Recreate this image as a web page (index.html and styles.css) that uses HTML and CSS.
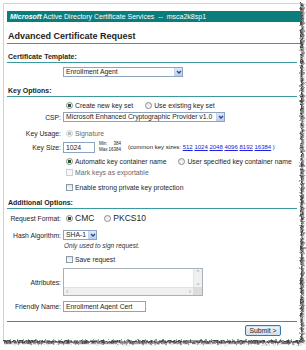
FILE: index.html
```html
<!DOCTYPE html>
<html lang="en">
<head>
  <meta charset="UTF-8" />
  <title>Microsoft Active Directory Certificate Services</title>
  <link rel="stylesheet" href="styles.css">
</head>
<body>
  <div class="paper">
    <div class="banner"><b>Microsoft</b> Active Directory Certificate Services &nbsp;--&nbsp; msca2k8sp1</div>
    <h1 class="title">Advanced Certificate Request</h1>

    <form class="form">
      <h2 class="section mt-7">Certificate Template:</h2>
      <div class="row mt-4">
        <span class="label"></span>
        <div class="select w-template">
          <select><option>Enrollment Agent</option></select>
          <span class="arrow"><svg width="8" height="8" viewBox="0 0 8 8"><path d="M2 3 L4 5 L6 3" fill="none" stroke="#23478c" stroke-width="1.3"/></svg></span>
        </div>
      </div>

      <h2 class="section mt-8">Key Options:</h2>
      <div class="row mt-3">
        <span class="label"></span>
        <div class="opts">
          <label class="opt"><input type="radio" class="radio" name="keyset" checked> Create new key set</label>
          <label class="opt"><input type="radio" class="radio" name="keyset"> Use existing key set</label>
        </div>
      </div>
      <div class="row mt-2">
        <span class="label">CSP:</span>
        <div class="select w-csp">
          <select><option>Microsoft Enhanced Cryptographic Provider v1.0</option></select>
          <span class="arrow"><svg width="8" height="8" viewBox="0 0 8 8"><path d="M2 3 L4 5 L6 3" fill="none" stroke="#23478c" stroke-width="1.3"/></svg></span>
        </div>
      </div>
      <div class="row mt-6">
        <span class="label">Key Usage:</span>
        <div class="opts">
          <label class="opt dim"><input type="radio" class="radio" checked disabled> Signature</label>
        </div>
      </div>
      <div class="row row-tall mt-3">
        <span class="label">Key Size:</span>
        <div class="keysize">
          <input type="text" class="field w-size" value="1024">
          <div class="limits">
            <span><i>Min:</i><i>384</i></span>
            <span><i>Max</i><i>16384</i></span>
          </div>
          <span class="common">(common key sizes: <a href="#">512</a> <a href="#">1024</a> <a href="#">2048</a> <a href="#">4096</a> <a href="#">8192</a> <a href="#">16384</a> )</span>
        </div>
      </div>
      <div class="row mt-4">
        <span class="label"></span>
        <div class="opts">
          <label class="opt"><input type="radio" class="radio" name="container" checked> Automatic key container name</label>
          <label class="opt"><input type="radio" class="radio" name="container"> User specified key container name</label>
        </div>
      </div>
      <div class="row mt-1">
        <span class="label"></span>
        <div class="opts">
          <label class="opt dim"><input type="checkbox" class="check" disabled> Mark keys as exportable</label>
        </div>
      </div>
      <div class="row mt-5">
        <span class="label"></span>
        <div class="opts">
          <label class="opt"><input type="checkbox" class="check"> Enable strong private key protection</label>
        </div>
      </div>

      <h2 class="section mt-5">Additional Options:</h2>
      <div class="row mt-4">
        <span class="label">Request Format:</span>
        <div class="opts big">
          <label class="opt"><input type="radio" class="radio" name="format" checked> CMC</label>
          <label class="opt"><input type="radio" class="radio" name="format"> PKCS10</label>
        </div>
      </div>
      <div class="row mt-7">
        <span class="label">Hash Algorithm:</span>
        <div class="select w-hash">
          <select><option>SHA-1</option></select>
          <span class="arrow"><svg width="8" height="8" viewBox="0 0 8 8"><path d="M2 3 L4 5 L6 3" fill="none" stroke="#23478c" stroke-width="1.3"/></svg></span>
        </div>
      </div>
      <div class="row row-note mt-1">
        <span class="label"></span>
        <em class="note">Only used to sign request.</em>
      </div>
      <div class="row mt-5">
        <span class="label"></span>
        <div class="opts">
          <label class="opt"><input type="checkbox" class="check"> Save request</label>
        </div>
      </div>
      <div class="row row-area mt-4">
        <span class="label">Attributes:</span>
        <div class="textbox">
          <textarea></textarea>
          <div class="vbar"><span>&#8963;</span><span>&#8964;</span></div>
          <div class="hbar"><span>&lsaquo;</span><span>&rsaquo;</span></div>
          <div class="corner"></div>
        </div>
      </div>
      <div class="row row-tall mt-5">
        <span class="label">Friendly Name:</span>
        <input type="text" class="field w-name" value="Enrollment Agent Cert">
      </div>

      <div class="rule"></div>
      <div class="actions">
        <button type="button" class="submit">Submit &gt;</button>
      </div>
    </form>
  </div>

  <svg class="torn" width="306" height="350" viewBox="0 0 306 350">
    <defs>
      <filter id="rough" x="-5%" y="-5%" width="110%" height="110%">
        <feTurbulence type="fractalNoise" baseFrequency="0.4" numOctaves="2" seed="7"/>
        <feDisplacementMap in="SourceGraphic" scale="5" xChannelSelector="R" yChannelSelector="G"/>
      </filter>
    </defs>
    <path d="M302.5 3 V342.5 H4" fill="none" stroke="#a0a0a0" stroke-width="3.5" filter="url(#rough)"/>
    <path d="M301.5 3 V341.5 H4" fill="none" stroke="#4a4a4a" stroke-width="1.8" filter="url(#rough)"/>
  </svg>
</body>
</html>
```

FILE: styles.css
```css
* {
  box-sizing: border-box;
}
body {
  margin: 0;
  background: #fff;
  color: #1e1e1e;
  font-family: "Liberation Sans", Arial, sans-serif;
  font-size: 6.8px;
}
.paper {
  width: 300px;
  height: 339px;
  margin: 3px 0 0 3px;
  padding: 7px 0 0 3px;
  border-top: 1px solid #d2d2d2;
  border-left: 1px solid #d2d2d2;
}
.banner {
  width: 295px;
  height: 11px;
  line-height: 11px;
  padding-left: 3px;
  background: #0b7d7d;
  color: #fff;
  font-size: 7px;
  white-space: nowrap;
}
.banner b {
  font-style: italic;
}
.title {
  width: 295px;
  height: 14px;
  margin: 8px 0 0;
  padding-left: 1px;
  line-height: 13px;
  font-size: 9px;
  font-weight: bold;
  border-bottom: 1px solid #3b9aa1;
}
.form {
  width: 290px;
  margin: 0;
}
.section {
  height: 12px;
  margin-bottom: 0;
  padding-left: 1px;
  line-height: 11px;
  font-size: 7px;
  font-weight: bold;
  border-bottom: 1px solid #3b9aa1;
}
.mt-1 { margin-top: 1px; }
.mt-2 { margin-top: 2px; }
.mt-3 { margin-top: 3px; }
.mt-4 { margin-top: 4px; }
.mt-5 { margin-top: 5px; }
.mt-6 { margin-top: 6px; }
.mt-7 { margin-top: 7px; }
.mt-8 { margin-top: 8px; }

.row {
  display: grid;
  grid-template-columns: 54px 1fr;
  column-gap: 2px;
  align-items: center;
  height: 10px;
}
.row-tall { height: 11px; }
.row-note { height: 8px; }
.row-area { height: 28px; }
.label {
  text-align: right;
  white-space: nowrap;
}

.opts {
  display: flex;
  align-items: center;
  gap: 12px;
  padding-left: 3px;
  white-space: nowrap;
}
.opt {
  display: inline-flex;
  align-items: center;
  gap: 2px;
}
.opts.big {
  gap: 10px;
  font-size: 8.5px;
}
.dim {
  color: #6a6a6a;
}
.radio,
.check {
  appearance: none;
  width: 7px;
  height: 7px;
  margin: 0;
  border: 1px solid #8b8b8b;
  background: linear-gradient(#e6e6e6, #fbfbfb);
}
.radio {
  border-radius: 50%;
}
.radio:checked {
  background: radial-gradient(circle, #26512a 0 1.4px, #f6f6f6 2px);
}
.check {
  border-color: #8f9aa8;
}
.radio:disabled,
.check:disabled {
  border-color: #cfcfcf;
  background: #f7f7f7;
}
.radio:checked:disabled {
  background: radial-gradient(circle, #b8b8b8 0 1.3px, #f7f7f7 2px);
}

.select {
  position: relative;
  height: 10px;
}
.select select {
  appearance: none;
  width: 100%;
  height: 100%;
  margin: 0;
  padding: 0 0 0 2px;
  border: 1px solid #8ea3c0;
  background: #fff;
  color: #1e1e1e;
  font: inherit;
  line-height: 8px;
}
.select .arrow {
  position: absolute;
  top: 1px;
  right: 1px;
  width: 8px;
  height: 8px;
  background: linear-gradient(#dfe9f8, #b9cdec);
  border-left: 1px solid #c7d4e8;
}
.select svg {
  display: block;
}
.w-template { width: 120px; }
.w-csp { width: 162px; }
.w-hash { width: 34px; }

.field {
  height: 11px;
  margin: 0;
  padding: 0 0 0 2px;
  border: 1px solid #8ea3c0;
  font: inherit;
  color: #1e1e1e;
}
.w-size { width: 32px; }
.w-name { width: 83px; }

.keysize {
  display: flex;
  align-items: center;
  white-space: nowrap;
}
.limits {
  display: flex;
  flex-direction: column;
  width: 22px;
  margin-left: 4px;
  font-size: 4.5px;
  line-height: 6px;
}
.limits span {
  display: flex;
  justify-content: space-between;
}
.limits i {
  font-style: normal;
}
.common {
  margin-left: 7px;
  font-size: 6px;
}
.common a {
  color: #2020e0;
}

.note {
  padding-left: 1px;
  font-size: 6.5px;
  color: #333;
}

.textbox {
  display: grid;
  grid-template-columns: 1fr 9px;
  grid-template-rows: 1fr 8px;
  width: 140px;
  height: 28px;
  border: 1px solid #a9b1bd;
}
.textbox textarea {
  margin: 0;
  padding: 0;
  border: none;
  resize: none;
  overflow: hidden;
}
.vbar,
.hbar {
  display: flex;
  justify-content: space-between;
  background: #f0f0f0;
  color: #a8a8a8;
  font-size: 7px;
  line-height: 8px;
}
.vbar {
  flex-direction: column;
  align-items: center;
  border-left: 1px solid #e2e2e2;
}
.hbar {
  padding: 0 2px;
  border-top: 1px solid #e2e2e2;
}
.corner {
  background: #dcdcdc;
}

.rule {
  height: 1px;
  margin-top: 9px;
  background: #2e9698;
}
.actions {
  display: flex;
  justify-content: flex-end;
  margin-top: 3px;
  padding-right: 16px;
}
.submit {
  width: 36px;
  height: 11px;
  padding: 0;
  border: 1px solid #3a78b4;
  border-radius: 2px;
  background: linear-gradient(#f5f5f5, #dadada);
  box-shadow: inset 0 0 0 1px #cfe3f7;
  color: #1e1e1e;
  font: inherit;
  line-height: 9px;
}

.torn {
  position: absolute;
  top: 0;
  left: 0;
  pointer-events: none;
}
```
